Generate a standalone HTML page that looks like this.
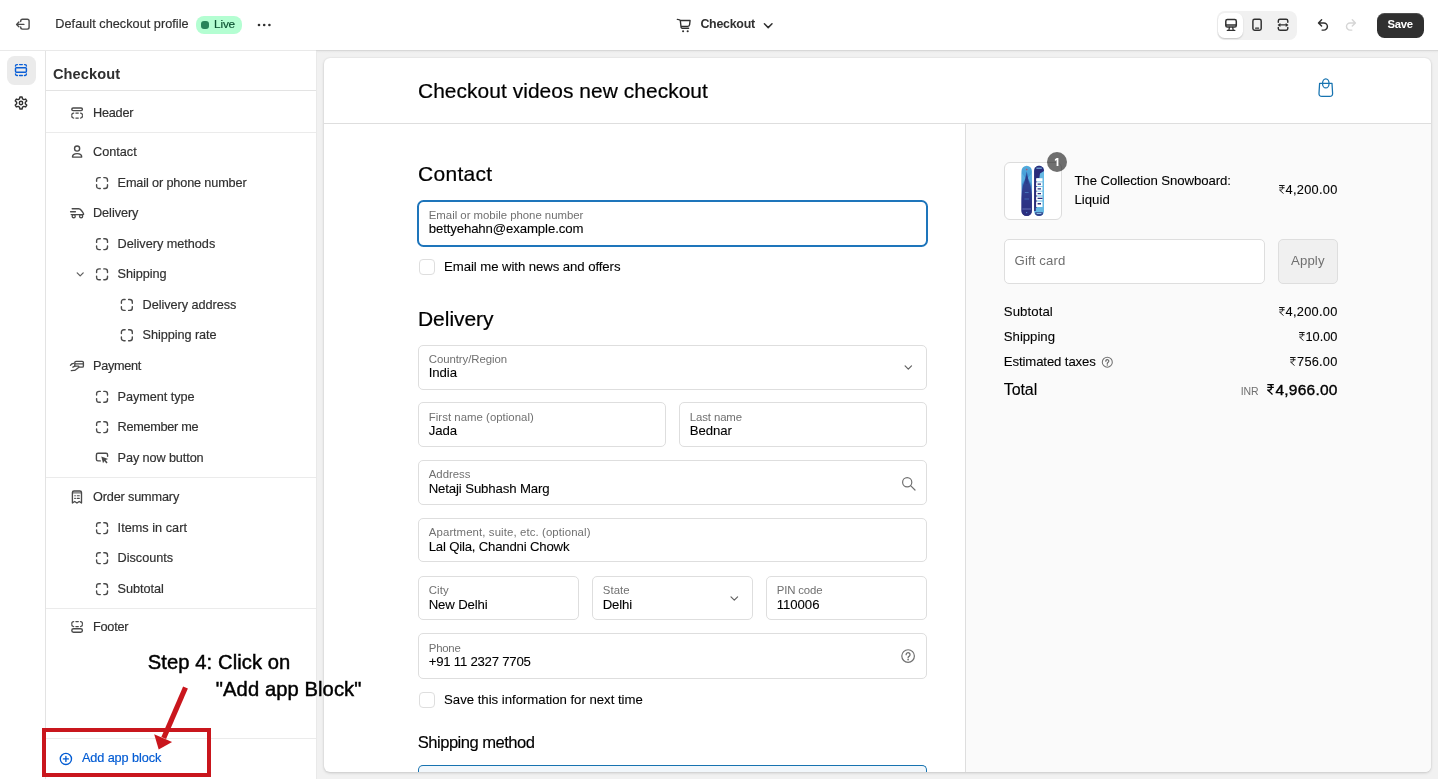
<!DOCTYPE html>
<html><head><meta charset="utf-8"><title>Checkout editor</title>
<style>
*{box-sizing:border-box;margin:0;padding:0}
html,body{width:1438px;height:779px;overflow:hidden}
body{position:relative;background:#f1f1f1;font-family:"Liberation Sans",sans-serif;color:#303030}
.abs,.t,.a,.f,.ic{position:absolute}
.t{white-space:nowrap;line-height:20px;height:20px}
.f{border:1px solid #dedede;border-radius:5px;background:#fff}
.hl{position:absolute;height:1px;background:#ebebeb}
.ic{overflow:visible}
</style></head><body>
<!-- top bar -->
<div class="abs" style="left:0;top:0;width:1438px;height:50px;background:#fff"></div>
<div class="abs" style="left:0;top:50px;width:1438px;height:1px;background:#d8d8d8"></div>
<div class="abs" style="left:0;top:51px;width:1438px;height:2px;background:linear-gradient(#e7e7e7,#f1f1f1)"></div>
<!-- rail + sidebar -->
<div class="abs" style="left:0;top:51px;width:45px;height:728px;background:#fff"></div>
<div class="abs" style="left:45px;top:51px;width:1px;height:728px;background:#e3e3e3"></div>
<div class="abs" style="left:46px;top:51px;width:270px;height:728px;background:#fff"></div>
<div class="abs" style="left:0;top:50px;width:316px;height:1px;background:#e9e9e9"></div>
<div class="abs" style="left:316px;top:51px;width:1px;height:728px;background:#e9e9e9"></div>
<div class="abs" style="left:7px;top:56px;width:29px;height:29px;border-radius:7.5px;background:#ebebeb"></div>
<div class="hl" style="left:46px;top:90px;width:270px;background:#e3e3e3"></div>
<div class="hl" style="left:46px;top:132px;width:270px"></div>
<div class="hl" style="left:46px;top:477px;width:270px"></div>
<div class="hl" style="left:46px;top:608px;width:270px"></div>
<div class="hl" style="left:46px;top:738px;width:270px"></div>
<!-- live badge -->
<div class="abs" style="left:195.7px;top:16.2px;width:46.3px;height:17.6px;border-radius:8px;background:#b4fed2"></div>
<div class="abs" style="left:201px;top:21.2px;width:7.6px;height:7.6px;border-radius:3px;background:#29845a"></div>
<!-- segmented -->
<div class="abs" style="left:1217px;top:11px;width:80px;height:28.5px;border-radius:8px;background:#f1f1f1"></div>
<div class="abs" style="left:1218.3px;top:12.8px;width:25px;height:25px;border-radius:6.5px;background:#fff;box-shadow:0 1px 1.5px rgba(0,0,0,.18)"></div>
<!-- save -->
<div class="abs" style="left:1377px;top:12.8px;width:47px;height:25px;border-radius:7.5px;background:#303030;box-shadow:inset 0 1px 0 rgba(255,255,255,.15)"></div>
<!-- preview card -->
<div class="abs" style="left:324px;top:58px;width:1107px;height:714px;border-radius:6px;background:#fff;box-shadow:0 1px 3px rgba(0,0,0,.17),0 0 2px rgba(0,0,0,.07);overflow:hidden">
  <div class="abs" style="left:642px;top:66px;width:465px;height:648px;background:#fafafa"></div>
  <div class="abs" style="left:641px;top:66px;width:1px;height:648px;background:#dedede"></div>
  <div class="abs" style="left:0;top:65px;width:1107px;height:1px;background:#dedede"></div>
</div>
<!-- fields -->
<div class="f" style="left:417px;top:200px;width:511px;height:46.6px;border:2.2px solid #1e75bb;border-radius:6.5px"></div>
<div class="f" style="left:419px;top:259px;width:16.2px;height:16.2px;border-radius:4px"></div>
<div class="f" style="left:418px;top:345px;width:509.3px;height:45px"></div>
<div class="f" style="left:418px;top:402px;width:247.8px;height:44.5px"></div>
<div class="f" style="left:679.1px;top:402px;width:248.2px;height:44.5px"></div>
<div class="f" style="left:418px;top:460px;width:509.3px;height:44.6px"></div>
<div class="f" style="left:418px;top:518px;width:509.3px;height:44.4px"></div>
<div class="f" style="left:418px;top:576px;width:160.8px;height:44.4px"></div>
<div class="f" style="left:592.1px;top:576px;width:160.7px;height:44.4px"></div>
<div class="f" style="left:766px;top:576px;width:161.3px;height:44.4px"></div>
<div class="f" style="left:418px;top:633px;width:509.3px;height:45.8px"></div>
<div class="f" style="left:419px;top:692px;width:16.2px;height:16.2px;border-radius:4px"></div>
<div class="abs" style="left:418px;top:764.6px;width:509.3px;height:7.4px;border:1px solid #1773b0;border-bottom:0;border-radius:5px 5px 0 0;background:#f2f7fb"></div>
<!-- right column -->
<div class="f" style="left:1004.2px;top:162px;width:57.6px;height:57.7px;border-radius:6px;border-color:#dcdcdc"></div>
<div class="abs" style="left:1047px;top:152.1px;width:19.9px;height:19.9px;border-radius:50%;background:rgba(0,0,0,.56)"></div>
<svg class="abs" style="left:0;top:0" width="1438" height="779"><path d="M1056.7 157.9H1058.4V166H1056.6V160L1054.9 160.9V159.3Z" fill="#fff"/></svg>
<div class="f" style="left:1004.2px;top:239px;width:260.7px;height:44.8px"></div>
<div class="f" style="left:1278.1px;top:239px;width:59.8px;height:44.8px;background:#f0f0f0;border-color:#dedede"></div>
<svg class="abs" style="left:0;top:0" width="1438" height="779" viewBox="0 0 1438 779">
<path d="M20.7 21.5V21Q20.7 19.2 22.5 19.2H27.3Q29.1 19.2 29.1 21V27.3Q29.1 29.1 27.3 29.1H22.5Q20.7 29.1 20.7 27.3V26.9M23.9 24.4H16.7M18.9 22.1L16.6 24.4L18.9 26.7" fill="none" stroke="#4a4a4a" stroke-width="1.4" stroke-linecap="round" stroke-linejoin="round" />
<circle cx="259.0" cy="25" r="1.3" fill="#303030"/>
<circle cx="264.2" cy="25" r="1.3" fill="#303030"/>
<circle cx="269.4" cy="25" r="1.3" fill="#303030"/>
<path d="M677.3 19.3Q679.8 19.3 680.3 20.6L681.1 27.3Q681.2 28.2 682.2 28.2H688.6M680.4 20.5H690.1L689.6 24.6Q689.4 26.4 687.6 26.4H681" fill="none" stroke="#303030" stroke-width="1.35" stroke-linecap="round" stroke-linejoin="round" />
<circle cx="683.1" cy="31.3" r="1.05" fill="#303030"/><circle cx="687.7" cy="31.3" r="1.05" fill="#303030"/>
<path d="M764.4 23.8L768.2 27.6L772 23.8" fill="none" stroke="#303030" stroke-width="1.5" stroke-linecap="round" stroke-linejoin="round" />
<path d="M1225.8 21.2Q1225.8 19.6 1227.4 19.6H1234.7Q1236.3 19.6 1236.3 21.2V25.5Q1236.3 27.1 1234.7 27.1H1227.4Q1225.8 27.1 1225.8 25.5ZM1225.8 24.9H1236.3" fill="none" stroke="#303030" stroke-width="1.5" stroke-linecap="round" stroke-linejoin="round" />
<path d="M1229.4 27.3L1228.9 30.2M1232.7 27.3L1233.2 30.2M1227.3 30.4H1234.8" fill="none" stroke="#303030" stroke-width="1.3" stroke-linecap="round" stroke-linejoin="round" />
<path d="M1252.9 21Q1252.9 19.3 1254.6 19.3H1259.5Q1261.2 19.3 1261.2 21V28.6Q1261.2 30.3 1259.5 30.3H1254.6Q1252.9 30.3 1252.9 28.6Z" fill="none" stroke="#303030" stroke-width="1.45" stroke-linecap="round" stroke-linejoin="round" />
<path d="M1255.6 28.2H1258.6" fill="none" stroke="#303030" stroke-width="1.2" stroke-linecap="round" stroke-linejoin="round" />
<path d="M1278.3 22.3V21Q1278.3 19.3 1280 19.3H1286.1Q1287.8 19.3 1287.8 21V22.3M1278.3 27.4V28.6Q1278.3 30.3 1280 30.3H1286.1Q1287.8 30.3 1287.8 28.6V27.4" fill="none" stroke="#303030" stroke-width="1.45" stroke-linecap="round" stroke-linejoin="round" />
<path d="M1279.5 24.9H1286.6" fill="none" stroke="#303030" stroke-width="1.3" stroke-linecap="round" stroke-linejoin="round" />
<path d="M1277.6 24.9L1280.4 22.9V26.9ZM1288.5 24.9L1285.7 22.9V26.9Z" fill="#303030"/>
<path d="M1321.6 19.8L1318.5 22.9L1321.6 26M1318.7 22.9H1323.8A3.6 3.6 0 0 1 1323.8 30.1H1322.1" fill="none" stroke="#303030" stroke-width="1.45" stroke-linecap="round" stroke-linejoin="round" />
<path d="M1352.3 19.8L1355.4 22.9L1352.3 26M1355.2 22.9H1350.1A3.6 3.6 0 0 0 1350.1 30.1H1351.8" fill="none" stroke="#d6d6d6" stroke-width="1.45" stroke-linecap="round" stroke-linejoin="round" />
<path d="M15.5 68.6Q15.5 67.7 16.4 67.7H25.5Q26.4 67.7 26.4 68.6V71.3Q26.4 72.2 25.5 72.2H16.4Q15.5 72.2 15.5 71.3Z" fill="none" stroke="#0a5fd6" stroke-width="1.45" stroke-linecap="round" stroke-linejoin="round" />
<path d="M15.5 66.1V65.9Q15.5 64.6 16.8 64.6H17.4M19.6 64.6H22.3M24.5 64.6H25.1Q26.4 64.6 26.4 65.9V66.1M15.5 73.9V74.1Q15.5 75.4 16.8 75.4H17.4M19.6 75.4H22.3M24.5 75.4H25.1Q26.4 75.4 26.4 74.1V73.9" fill="none" stroke="#0a5fd6" stroke-width="1.45" stroke-linecap="round" stroke-linejoin="round" />
<path d="M19.92 97.00L22.08 97.00L22.49 98.86L23.84 99.64L25.66 99.06L26.74 100.93L25.33 102.22L25.33 103.78L26.74 105.07L25.66 106.94L23.84 106.36L22.49 107.14L22.08 109.00L19.92 109.00L19.51 107.14L18.16 106.36L16.34 106.94L15.26 105.07L16.67 103.78L16.67 102.22L15.26 100.93L16.34 99.06L18.16 99.64L19.51 98.86Z" fill="none" stroke="#303030" stroke-width="1.4" stroke-linecap="round" stroke-linejoin="round" />
<circle cx="21" cy="103" r="1.7" fill="none" stroke="#303030" stroke-width="1.4"/>
<path d="M71.8 109.3Q71.8 108 73.1 108H81.1Q82.4 108 82.4 109.3Q82.4 110.6 81.1 110.6H73.1Q71.8 110.6 71.8 109.3Z" fill="none" stroke="#4a4a4a" stroke-width="1.4" stroke-linecap="round" stroke-linejoin="round" />
<path d="M71.8 114.9Q71.8 113 73.7 113M75.9 113H78.3M80.5 113Q82.4 113 82.4 114.9M71.8 116.1Q71.8 118 73.7 118M75.9 118H78.3M80.5 118Q82.4 118 82.4 116.1" fill="none" stroke="#4a4a4a" stroke-width="1.25" stroke-linecap="round" stroke-linejoin="round" />
<circle cx="77.1" cy="148.6" r="2.55" fill="none" stroke="#4a4a4a" stroke-width="1.4"/>
<path d="M72.5 157.1Q72.5 153.6 77.1 153.6Q81.7 153.6 81.7 157.1Z" fill="none" stroke="#4a4a4a" stroke-width="1.4" stroke-linecap="round" stroke-linejoin="round" />
<path transform="translate(95.9 176.9)" d="M0.7 4.4V3.2Q0.7 0.7 3.2 0.7H4.4M7.9 0.7H9.100000000000001Q11.600000000000001 0.7 11.600000000000001 3.2V4.4M11.600000000000001 7.9V9.100000000000001Q11.600000000000001 11.600000000000001 9.100000000000001 11.600000000000001H7.9M4.4 11.600000000000001H3.2Q0.7 11.600000000000001 0.7 9.100000000000001V7.9" fill="none" stroke="#4a4a4a" stroke-width="1.4" stroke-linecap="round"/>
<path transform="translate(95.9 238)" d="M0.7 4.4V3.2Q0.7 0.7 3.2 0.7H4.4M7.9 0.7H9.100000000000001Q11.600000000000001 0.7 11.600000000000001 3.2V4.4M11.600000000000001 7.9V9.100000000000001Q11.600000000000001 11.600000000000001 9.100000000000001 11.600000000000001H7.9M4.4 11.600000000000001H3.2Q0.7 11.600000000000001 0.7 9.100000000000001V7.9" fill="none" stroke="#4a4a4a" stroke-width="1.4" stroke-linecap="round"/>
<path transform="translate(95.9 268.2)" d="M0.7 4.4V3.2Q0.7 0.7 3.2 0.7H4.4M7.9 0.7H9.100000000000001Q11.600000000000001 0.7 11.600000000000001 3.2V4.4M11.600000000000001 7.9V9.100000000000001Q11.600000000000001 11.600000000000001 9.100000000000001 11.600000000000001H7.9M4.4 11.600000000000001H3.2Q0.7 11.600000000000001 0.7 9.100000000000001V7.9" fill="none" stroke="#4a4a4a" stroke-width="1.4" stroke-linecap="round"/>
<path transform="translate(120.7 298.8)" d="M0.7 4.4V3.2Q0.7 0.7 3.2 0.7H4.4M7.9 0.7H9.100000000000001Q11.600000000000001 0.7 11.600000000000001 3.2V4.4M11.600000000000001 7.9V9.100000000000001Q11.600000000000001 11.600000000000001 9.100000000000001 11.600000000000001H7.9M4.4 11.600000000000001H3.2Q0.7 11.600000000000001 0.7 9.100000000000001V7.9" fill="none" stroke="#4a4a4a" stroke-width="1.4" stroke-linecap="round"/>
<path transform="translate(120.7 329.1)" d="M0.7 4.4V3.2Q0.7 0.7 3.2 0.7H4.4M7.9 0.7H9.100000000000001Q11.600000000000001 0.7 11.600000000000001 3.2V4.4M11.600000000000001 7.9V9.100000000000001Q11.600000000000001 11.600000000000001 9.100000000000001 11.600000000000001H7.9M4.4 11.600000000000001H3.2Q0.7 11.600000000000001 0.7 9.100000000000001V7.9" fill="none" stroke="#4a4a4a" stroke-width="1.4" stroke-linecap="round"/>
<path transform="translate(95.9 390.7)" d="M0.7 4.4V3.2Q0.7 0.7 3.2 0.7H4.4M7.9 0.7H9.100000000000001Q11.600000000000001 0.7 11.600000000000001 3.2V4.4M11.600000000000001 7.9V9.100000000000001Q11.600000000000001 11.600000000000001 9.100000000000001 11.600000000000001H7.9M4.4 11.600000000000001H3.2Q0.7 11.600000000000001 0.7 9.100000000000001V7.9" fill="none" stroke="#4a4a4a" stroke-width="1.4" stroke-linecap="round"/>
<path transform="translate(95.9 421)" d="M0.7 4.4V3.2Q0.7 0.7 3.2 0.7H4.4M7.9 0.7H9.100000000000001Q11.600000000000001 0.7 11.600000000000001 3.2V4.4M11.600000000000001 7.9V9.100000000000001Q11.600000000000001 11.600000000000001 9.100000000000001 11.600000000000001H7.9M4.4 11.600000000000001H3.2Q0.7 11.600000000000001 0.7 9.100000000000001V7.9" fill="none" stroke="#4a4a4a" stroke-width="1.4" stroke-linecap="round"/>
<path transform="translate(95.9 522)" d="M0.7 4.4V3.2Q0.7 0.7 3.2 0.7H4.4M7.9 0.7H9.100000000000001Q11.600000000000001 0.7 11.600000000000001 3.2V4.4M11.600000000000001 7.9V9.100000000000001Q11.600000000000001 11.600000000000001 9.100000000000001 11.600000000000001H7.9M4.4 11.600000000000001H3.2Q0.7 11.600000000000001 0.7 9.100000000000001V7.9" fill="none" stroke="#4a4a4a" stroke-width="1.4" stroke-linecap="round"/>
<path transform="translate(95.9 552)" d="M0.7 4.4V3.2Q0.7 0.7 3.2 0.7H4.4M7.9 0.7H9.100000000000001Q11.600000000000001 0.7 11.600000000000001 3.2V4.4M11.600000000000001 7.9V9.100000000000001Q11.600000000000001 11.600000000000001 9.100000000000001 11.600000000000001H7.9M4.4 11.600000000000001H3.2Q0.7 11.600000000000001 0.7 9.100000000000001V7.9" fill="none" stroke="#4a4a4a" stroke-width="1.4" stroke-linecap="round"/>
<path transform="translate(95.9 583)" d="M0.7 4.4V3.2Q0.7 0.7 3.2 0.7H4.4M7.9 0.7H9.100000000000001Q11.600000000000001 0.7 11.600000000000001 3.2V4.4M11.600000000000001 7.9V9.100000000000001Q11.600000000000001 11.600000000000001 9.100000000000001 11.600000000000001H7.9M4.4 11.600000000000001H3.2Q0.7 11.600000000000001 0.7 9.100000000000001V7.9" fill="none" stroke="#4a4a4a" stroke-width="1.4" stroke-linecap="round"/>
<path d="M72.2 208.8H78.6Q80.2 208.8 81 210L83 212.6Q83.5 213.2 83.5 214V214.6M70.6 211.7H75.4M71.2 214.6H83.5" fill="none" stroke="#4a4a4a" stroke-width="1.4" stroke-linecap="round" stroke-linejoin="round" />
<circle cx="73.7" cy="216.2" r="1.55" fill="none" stroke="#4a4a4a" stroke-width="1.3"/><circle cx="81.1" cy="216.2" r="1.55" fill="none" stroke="#4a4a4a" stroke-width="1.3"/>
<path d="M77.2 272.9L80.2 275.9L83.2 272.9" fill="none" stroke="#616161" stroke-width="1.3" stroke-linecap="round" stroke-linejoin="round" />
<path d="M74.8 362.6Q74.8 361.4 76 361.4H82.2Q83.4 361.4 83.4 362.6V365.9Q83.4 367.1 82.2 367.1H79.2M74.8 362.6V366.2M74.8 363.9H83.4" fill="none" stroke="#4a4a4a" stroke-width="1.35" stroke-linecap="round" stroke-linejoin="round" />
<path d="M70.4 365.3Q71.6 363.5 73.6 363.4M72.9 367.2L74.8 366.2H78.2Q79.4 366.4 78.6 367.4L75.4 369.9Q74.8 370.4 73.8 370.4L71.3 370.6" fill="none" stroke="#4a4a4a" stroke-width="1.3" stroke-linecap="round" stroke-linejoin="round" />
<path d="M100.3 460.9H98Q96.4 460.9 96.4 459.3V454.9Q96.4 453.3 98 453.3H106Q107.6 453.3 107.6 454.9V456.2" fill="none" stroke="#4a4a4a" stroke-width="1.4" stroke-linecap="round" stroke-linejoin="round" />
<path d="M101.3 456.5L108.2 458.9L105.6 460L107.6 462.4L106.4 463.4L104.4 461L103 463.3Z" fill="#4a4a4a"/>
<path d="M72.4 503V492.6Q72.4 491 74 491H79.9Q81.5 491 81.5 492.6V503L79.2 501.5L76.95 503L74.7 501.5Z" fill="none" stroke="#4a4a4a" stroke-width="1.35" stroke-linecap="round" stroke-linejoin="round" />
<path d="M72.8 492.9H81.1" fill="none" stroke="#4a4a4a" stroke-width="1.0" stroke-linecap="round" stroke-linejoin="round" />
<path d="M74.7 495.7H75.4M77.2 495.7H79.3M74.7 498.4H75.4M77.2 498.4H79.3" fill="none" stroke="#4a4a4a" stroke-width="1.1" stroke-linecap="round" stroke-linejoin="round" />
<path d="M71.8 623.5Q71.8 621.6 73.7 621.6M75.9 621.6H78.3M80.5 621.6Q82.4 621.6 82.4 623.5M71.8 624.6Q71.8 626.5 73.7 626.5M75.9 626.5H78.3M80.5 626.5Q82.4 626.5 82.4 624.6" fill="none" stroke="#4a4a4a" stroke-width="1.25" stroke-linecap="round" stroke-linejoin="round" />
<path d="M71.8 630.5Q71.8 628.8 73.5 628.8H80.7Q82.4 628.8 82.4 630.5Q82.4 632.2 80.7 632.2H73.5Q71.8 632.2 71.8 630.5Z" fill="none" stroke="#4a4a4a" stroke-width="1.4" stroke-linecap="round" stroke-linejoin="round" />
<circle cx="65.9" cy="758.9" r="5.6" fill="none" stroke="#005bd3" stroke-width="1.35"/>
<path d="M63.4 758.9H68.4M65.9 756.4V761.4" fill="none" stroke="#005bd3" stroke-width="1.35" stroke-linecap="round" stroke-linejoin="round" />
<path d="M1319.6 83.4H1332L1332.6 93.4Q1332.7 96.4 1329.7 96.4H1321.9Q1318.9 96.4 1319 93.4Z" fill="none" stroke="#1773b0" stroke-width="1.25" stroke-linecap="round" stroke-linejoin="round" />
<ellipse cx="1325.8" cy="83.4" rx="3.25" ry="4.55" fill="none" stroke="#1773b0" stroke-width="1.25"/>
<path d="M905.1 365.9L908.3 369.1L911.5 365.9" fill="none" stroke="#616161" stroke-width="1.2" stroke-linecap="round" stroke-linejoin="round" />
<path d="M731 596.9L734.3 600.1L737.6 596.9" fill="none" stroke="#616161" stroke-width="1.2" stroke-linecap="round" stroke-linejoin="round" />
<circle cx="907.2" cy="482.2" r="4.6" fill="none" stroke="#707070" stroke-width="1.2"/>
<path d="M910.6 485.6L915 490" fill="none" stroke="#707070" stroke-width="1.2" stroke-linecap="round" stroke-linejoin="round" />
<circle cx="908.1" cy="656.05" r="6.3" fill="none" stroke="#707070" stroke-width="1.2"/>
<g transform="translate(908.1 656.05) scale(1.0)"><path d="M-1.95 -1.35A1.95 1.95 0 1 1 1.2 0.1Q0 0.75 0 1.75" fill="none" stroke="#707070" stroke-width="1.30" stroke-linecap="round"/><circle cx="0" cy="3.55" r="0.85" fill="#707070"/></g>
<circle cx="1107.3" cy="362.2" r="5.0" fill="none" stroke="#707070" stroke-width="1.05"/>
<g transform="translate(1107.3 362.2) scale(0.76)"><path d="M-1.95 -1.35A1.95 1.95 0 1 1 1.2 0.1Q0 0.75 0 1.75" fill="none" stroke="#707070" stroke-width="1.71" stroke-linecap="round"/><circle cx="0" cy="3.55" r="0.98" fill="#707070"/></g>
<defs>
<linearGradient id="b1" x1="0" y1="0" x2="0" y2="1"><stop offset="0" stop-color="#55addc"/><stop offset=".28" stop-color="#3f97d6"/><stop offset=".5" stop-color="#3a6fbe"/><stop offset=".72" stop-color="#2e3f93"/><stop offset="1" stop-color="#2a2670"/></linearGradient>
<clipPath id="c1"><rect x="1021.5" y="165.8" width="10.4" height="50.3" rx="5.2"/></clipPath>
<clipPath id="c2"><rect x="1034.1" y="165.8" width="9.9" height="50.3" rx="4.95"/></clipPath>
</defs>
<g clip-path="url(#c1)"><rect x="1021" y="165" width="12" height="52" fill="url(#b1)"/>
<path d="M1026.7 175L1030.6 186L1032.5 199V217H1021V199L1022.8 186Z" fill="#2b2f82" opacity=".78"/>
<path d="M1026.7 171.5L1028.3 179L1027.4 184H1026L1025.1 179Z" fill="#2a3888" opacity=".75"/>
<path d="M1021 172L1025.5 178L1021 186ZM1032.5 172L1027.9 178L1032.5 186Z" fill="#6cc0e6" opacity=".55"/>
<rect x="1024.8" y="192" width="3.8" height="1" fill="#4f86c8" opacity=".7"/><rect x="1024.4" y="198.5" width="4.6" height="1" fill="#4f86c8" opacity=".6"/>
<rect x="1022.4" y="208.4" width="8.6" height="1.2" fill="#6a74b8" opacity=".75"/><circle cx="1026.7" cy="169.6" r=".8" fill="#c0506a"/><circle cx="1026.7" cy="212.6" r=".6" fill="#5a9ad8"/></g>
<g clip-path="url(#c2)"><rect x="1033" y="165" width="12" height="52" fill="#66b9e4"/>
<path d="M1033 165H1045V170.5L1040 173.6L1039.4 178H1037V207.5H1035.8V211H1033Z" fill="#2b2c7b"/>
<path d="M1035.2 212.2H1042.9V217H1035.2Z" fill="#2b2c7b" opacity=".85"/>
<path d="M1036.1 178.2h6.4v3.2h-6.4zM1036.1 182.2h6.4v3.8h-6.4zM1036.1 186.8h6.4v4h-6.4zM1036.1 191.6h6.4v4h-6.4zM1036.1 196.4h6.4v4.2h-6.4zM1036.1 201.4h6.4v5.6h-6.4z" fill="#fff"/>
<path d="M1037.6 183.6h3.4v1.2h-3.4zM1037.6 188.2h3.4v1.3h-3.4zM1037.6 193h3.4v1.3h-3.4zM1037.6 197.8h4.9v1.3h-4.9zM1037.6 203h3.4v1.4h-3.4z" fill="#2b2c7b"/>
<rect x="1036.4" y="167.6" width="5.4" height="1.3" fill="#7fc4ea" opacity=".8"/><rect x="1036.6" y="212.9" width="4.8" height="1.1" fill="#8fd0f0" opacity=".9"/></g>
</svg>
<div class="abs" style="left:0;top:0;width:1438px;height:779px;will-change:transform"><span class="t" style="left:55.3px;top:14.00px;font-size:12.7px;-webkit-text-stroke:0.18px #303030;letter-spacing:0.029px;color:#303030;">Default checkout profile</span>
<span class="t" style="left:214.1px;top:14.00px;font-size:11.8px;-webkit-text-stroke:0.18px #0c5132;letter-spacing:-0.183px;color:#0c5132;">Live</span>
<span class="t" style="left:700.4px;top:14.00px;font-size:12.4px;font-weight:700;letter-spacing:-0.246px;color:#303030;">Checkout</span>
<span class="t" style="left:1387.4px;top:14.00px;font-size:11.3px;font-weight:700;letter-spacing:-0.271px;color:#ffffff;">Save</span>
<span class="t" style="left:52.9px;top:64.00px;font-size:14.6px;font-weight:700;letter-spacing:0.097px;color:#303030;">Checkout</span>
<span class="t" style="left:93.0px;top:103.00px;font-size:12.7px;-webkit-text-stroke:0.18px #303030;letter-spacing:-0.233px;color:#303030;">Header</span>
<span class="t" style="left:93.0px;top:142.00px;font-size:12.7px;-webkit-text-stroke:0.18px #303030;letter-spacing:-0.012px;color:#303030;">Contact</span>
<span class="t" style="left:117.6px;top:173.00px;font-size:12.7px;-webkit-text-stroke:0.18px #303030;letter-spacing:-0.141px;color:#303030;">Email or phone number</span>
<span class="t" style="left:93.0px;top:203.00px;font-size:12.7px;-webkit-text-stroke:0.18px #303030;letter-spacing:-0.052px;color:#303030;">Delivery</span>
<span class="t" style="left:117.6px;top:234.00px;font-size:12.7px;-webkit-text-stroke:0.18px #303030;letter-spacing:-0.024px;color:#303030;">Delivery methods</span>
<span class="t" style="left:117.6px;top:264.00px;font-size:12.7px;-webkit-text-stroke:0.18px #303030;letter-spacing:-0.047px;color:#303030;">Shipping</span>
<span class="t" style="left:142.5px;top:295.00px;font-size:12.7px;-webkit-text-stroke:0.18px #303030;letter-spacing:-0.036px;color:#303030;">Delivery address</span>
<span class="t" style="left:142.5px;top:325.00px;font-size:12.7px;-webkit-text-stroke:0.18px #303030;letter-spacing:-0.052px;color:#303030;">Shipping rate</span>
<span class="t" style="left:93.0px;top:356.00px;font-size:12.7px;-webkit-text-stroke:0.18px #303030;letter-spacing:-0.286px;color:#303030;">Payment</span>
<span class="t" style="left:117.6px;top:387.00px;font-size:12.7px;-webkit-text-stroke:0.18px #303030;letter-spacing:-0.047px;color:#303030;">Payment type</span>
<span class="t" style="left:117.6px;top:417.00px;font-size:12.7px;-webkit-text-stroke:0.18px #303030;letter-spacing:-0.304px;color:#303030;">Remember me</span>
<span class="t" style="left:117.6px;top:448.00px;font-size:12.7px;-webkit-text-stroke:0.18px #303030;letter-spacing:-0.108px;color:#303030;">Pay now button</span>
<span class="t" style="left:93.0px;top:487.00px;font-size:12.7px;-webkit-text-stroke:0.18px #303030;letter-spacing:-0.155px;color:#303030;">Order summary</span>
<span class="t" style="left:117.6px;top:518.00px;font-size:12.7px;-webkit-text-stroke:0.18px #303030;letter-spacing:0.022px;color:#303030;">Items in cart</span>
<span class="t" style="left:117.6px;top:548.00px;font-size:12.7px;-webkit-text-stroke:0.18px #303030;letter-spacing:-0.032px;color:#303030;">Discounts</span>
<span class="t" style="left:117.6px;top:579.00px;font-size:12.7px;-webkit-text-stroke:0.18px #303030;letter-spacing:-0.057px;color:#303030;">Subtotal</span>
<span class="t" style="left:93.0px;top:617.00px;font-size:12.7px;-webkit-text-stroke:0.18px #303030;letter-spacing:-0.242px;color:#303030;">Footer</span>
<span class="t" style="left:81.9px;top:748.00px;font-size:12.7px;-webkit-text-stroke:0.18px #005bd3;letter-spacing:-0.088px;color:#005bd3;">Add app block</span>
<span class="t" style="left:147.8px;top:652.00px;font-size:20.2px;-webkit-text-stroke:0.45px #000000;letter-spacing:0.075px;color:#000000;">Step 4: Click on</span>
<span class="t" style="left:215.8px;top:679.00px;font-size:20.2px;-webkit-text-stroke:0.45px #000000;letter-spacing:0.077px;color:#000000;">&quot;Add app Block&quot;</span>
<span class="t" style="left:418.0px;top:80.50px;font-size:20.9px;-webkit-text-stroke:0.22px #000000;letter-spacing:0.069px;color:#000000;">Checkout videos new checkout</span>
<span class="t" style="left:418.0px;top:163.50px;font-size:21px;-webkit-text-stroke:0.22px #000000;letter-spacing:0.298px;color:#000000;">Contact</span>
<span class="t" style="left:418.0px;top:308.50px;font-size:21px;-webkit-text-stroke:0.22px #000000;letter-spacing:-0.043px;color:#000000;">Delivery</span>
<span class="t" style="left:417.8px;top:732.50px;font-size:16.6px;-webkit-text-stroke:0.15px #000000;letter-spacing:-0.532px;color:#000000;">Shipping method</span>
<span class="t" style="left:428.8px;top:205.00px;font-size:11.4px;letter-spacing:-0.020px;color:#707070;">Email or mobile phone number</span>
<span class="t" style="left:428.7px;top:218.50px;font-size:13.2px;-webkit-text-stroke:0.1px #000000;letter-spacing:-0.114px;color:#000000;">bettyehahn@example.com</span>
<span class="t" style="left:428.8px;top:349.00px;font-size:11.4px;letter-spacing:-0.067px;color:#707070;">Country/Region</span>
<span class="t" style="left:428.7px;top:362.50px;font-size:13.2px;-webkit-text-stroke:0.1px #000000;letter-spacing:-0.079px;color:#000000;">India</span>
<span class="t" style="left:428.8px;top:407.00px;font-size:11.4px;letter-spacing:0.027px;color:#707070;">First name (optional)</span>
<span class="t" style="left:428.7px;top:420.50px;font-size:13.2px;-webkit-text-stroke:0.1px #000000;letter-spacing:-0.106px;color:#000000;">Jada</span>
<span class="t" style="left:689.8px;top:407.00px;font-size:11.4px;letter-spacing:-0.115px;color:#707070;">Last name</span>
<span class="t" style="left:689.7px;top:420.50px;font-size:13.2px;-webkit-text-stroke:0.1px #000000;letter-spacing:-0.088px;color:#000000;">Bednar</span>
<span class="t" style="left:428.8px;top:464.00px;font-size:11.4px;letter-spacing:-0.035px;color:#707070;">Address</span>
<span class="t" style="left:428.7px;top:478.50px;font-size:13.2px;-webkit-text-stroke:0.1px #000000;letter-spacing:-0.120px;color:#000000;">Netaji Subhash Marg</span>
<span class="t" style="left:428.8px;top:522.00px;font-size:11.4px;letter-spacing:0.106px;color:#707070;">Apartment, suite, etc. (optional)</span>
<span class="t" style="left:428.7px;top:536.50px;font-size:13.2px;-webkit-text-stroke:0.1px #000000;letter-spacing:-0.198px;color:#000000;">Lal Qila, Chandni Chowk</span>
<span class="t" style="left:428.8px;top:580.00px;font-size:11.4px;letter-spacing:0.086px;color:#707070;">City</span>
<span class="t" style="left:428.7px;top:594.50px;font-size:13.2px;-webkit-text-stroke:0.1px #000000;letter-spacing:-0.140px;color:#000000;">New Delhi</span>
<span class="t" style="left:602.8px;top:580.00px;font-size:11.4px;letter-spacing:0.069px;color:#707070;">State</span>
<span class="t" style="left:602.7px;top:594.50px;font-size:13.2px;-webkit-text-stroke:0.1px #000000;letter-spacing:-0.143px;color:#000000;">Delhi</span>
<span class="t" style="left:776.8px;top:580.00px;font-size:11.4px;letter-spacing:-0.168px;color:#707070;">PIN code</span>
<span class="t" style="left:776.7px;top:594.50px;font-size:13.2px;-webkit-text-stroke:0.1px #000000;letter-spacing:-0.048px;color:#000000;">110006</span>
<span class="t" style="left:428.8px;top:638.00px;font-size:11.4px;letter-spacing:-0.238px;color:#707070;">Phone</span>
<span class="t" style="left:428.7px;top:651.50px;font-size:13.2px;-webkit-text-stroke:0.1px #000000;letter-spacing:-0.236px;color:#000000;">+91 11 2327 7705</span>
<span class="t" style="left:444.1px;top:256.50px;font-size:13.2px;-webkit-text-stroke:0.1px #000000;letter-spacing:-0.079px;color:#000000;">Email me with news and offers</span>
<span class="t" style="left:444.1px;top:689.50px;font-size:13.2px;-webkit-text-stroke:0.1px #000000;letter-spacing:-0.020px;color:#000000;">Save this information for next time</span>
<span class="t" style="left:1074.4px;top:170.50px;font-size:13.2px;-webkit-text-stroke:0.1px #000000;letter-spacing:-0.073px;color:#000000;">The Collection Snowboard:</span>
<span class="t" style="left:1074.4px;top:189.50px;font-size:13.2px;-webkit-text-stroke:0.1px #000000;letter-spacing:0.038px;color:#000000;">Liquid</span>
<span class="t" style="left:1014.6px;top:250.50px;font-size:13.2px;letter-spacing:0.106px;color:#707070;">Gift card</span>
<span class="t" style="left:1291.1px;top:250.50px;font-size:13.2px;letter-spacing:0.098px;color:#707070;">Apply</span>
<span class="t" style="left:1003.8px;top:301.50px;font-size:13.2px;-webkit-text-stroke:0.1px #000000;letter-spacing:0.084px;color:#000000;">Subtotal</span>
<span class="t" style="left:1003.8px;top:326.50px;font-size:13.2px;-webkit-text-stroke:0.1px #000000;letter-spacing:-0.019px;color:#000000;">Shipping</span>
<span class="t" style="left:1003.8px;top:351.50px;font-size:13.2px;-webkit-text-stroke:0.1px #000000;letter-spacing:-0.124px;color:#000000;">Estimated taxes</span>
<span class="t" style="left:1003.7px;top:379.50px;font-size:16.0px;-webkit-text-stroke:0.12px #000000;letter-spacing:-0.059px;color:#000000;">Total</span>
<span class="t" style="left:1240.7px;top:381.00px;font-size:10.5px;letter-spacing:-0.132px;color:#707070;">INR</span>
<svg class="a" style="left:1278.70px;top:185.19px" width="5.82" height="8.81" viewBox="0 0 9.2 14" preserveAspectRatio="none"><path d="M0.4 0.8H8.9M0.4 4.4H8.9M0.4 0.8H2.9C6.9 0.8 6.9 8 2.9 8H0.9L7.2 13.7" fill="none" stroke="#000" stroke-width="1.4" stroke-linejoin="miter"/></svg>
<span class="t" style="left:1285.6px;top:179.50px;font-size:12.8px;-webkit-text-stroke:0.1px #000;letter-spacing:0.266px;color:#000;">4,200.00</span>
<svg class="a" style="left:1278.70px;top:307.19px" width="5.82" height="8.81" viewBox="0 0 9.2 14" preserveAspectRatio="none"><path d="M0.4 0.8H8.9M0.4 4.4H8.9M0.4 0.8H2.9C6.9 0.8 6.9 8 2.9 8H0.9L7.2 13.7" fill="none" stroke="#000" stroke-width="1.4" stroke-linejoin="miter"/></svg>
<span class="t" style="left:1285.6px;top:301.50px;font-size:12.8px;-webkit-text-stroke:0.1px #000;letter-spacing:0.266px;color:#000;">4,200.00</span>
<svg class="a" style="left:1298.70px;top:332.19px" width="5.82" height="8.81" viewBox="0 0 9.2 14" preserveAspectRatio="none"><path d="M0.4 0.8H8.9M0.4 4.4H8.9M0.4 0.8H2.9C6.9 0.8 6.9 8 2.9 8H0.9L7.2 13.7" fill="none" stroke="#000" stroke-width="1.4" stroke-linejoin="miter"/></svg>
<span class="t" style="left:1305.6px;top:326.50px;font-size:12.8px;-webkit-text-stroke:0.1px #000;letter-spacing:-0.086px;color:#000;">10.00</span>
<svg class="a" style="left:1290.20px;top:357.19px" width="5.82" height="8.81" viewBox="0 0 9.2 14" preserveAspectRatio="none"><path d="M0.4 0.8H8.9M0.4 4.4H8.9M0.4 0.8H2.9C6.9 0.8 6.9 8 2.9 8H0.9L7.2 13.7" fill="none" stroke="#000" stroke-width="1.4" stroke-linejoin="miter"/></svg>
<span class="t" style="left:1297.1px;top:351.50px;font-size:12.8px;-webkit-text-stroke:0.1px #000;letter-spacing:0.209px;color:#000;">756.00</span>
<svg class="a" style="left:1267.00px;top:384.34px" width="7.05" height="10.66" viewBox="0 0 9.2 14" preserveAspectRatio="none"><path d="M0.4 0.8H8.9M0.4 4.4H8.9M0.4 0.8H2.9C6.9 0.8 6.9 8 2.9 8H0.9L7.2 13.7" fill="none" stroke="#000" stroke-width="1.75" stroke-linejoin="miter"/></svg>
<span class="t" style="left:1275.4px;top:379.50px;font-size:15.5px;-webkit-text-stroke:0.4px #000;letter-spacing:0.241px;color:#000;">4,966.00</span></div>
<!-- annotation -->
<div class="abs" style="left:42.2px;top:728px;width:168.6px;height:48.8px;border:4.9px solid #c9161d"></div>
<svg class="abs" style="left:0;top:0" width="1438" height="779" viewBox="0 0 1438 779"><path d="M185.5 687.5L163.7 738.0" stroke="#c9161d" stroke-width="5.2" fill="none"/><path d="M154.2 734.3L172.1 742.0L158.7 749.6Z" fill="#c9161d"/></svg>
</body></html>
